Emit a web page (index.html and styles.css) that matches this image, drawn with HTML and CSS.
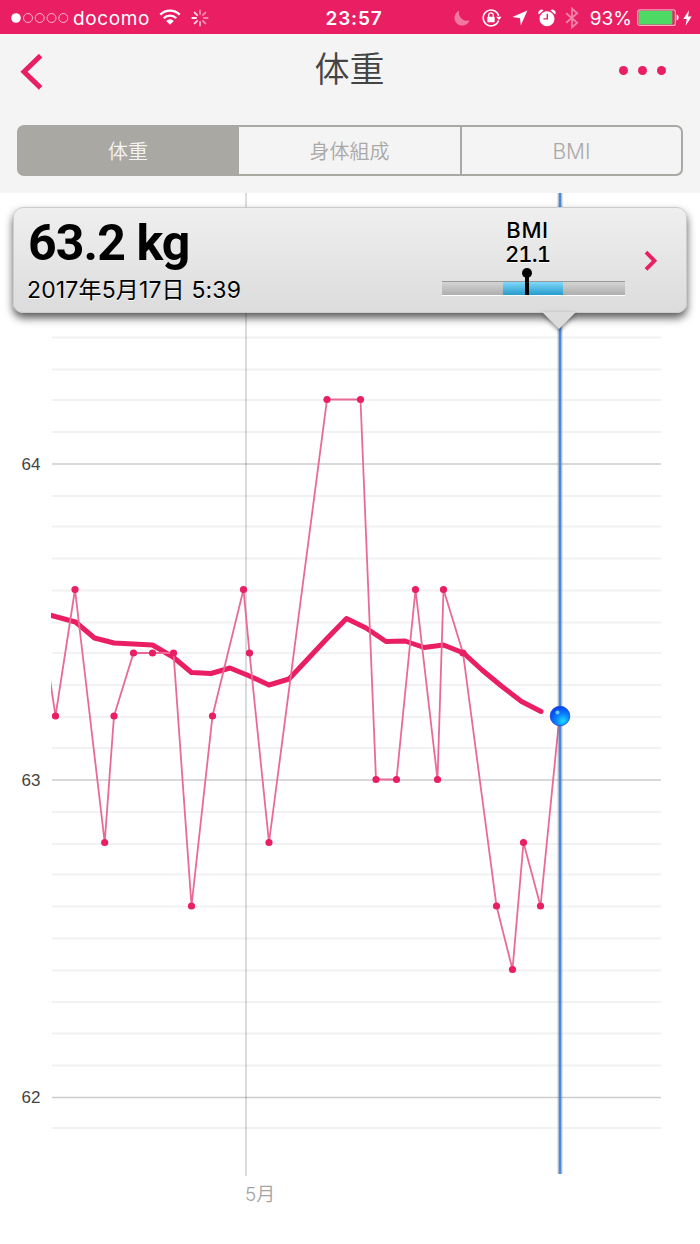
FILE: index.html
```html
<!DOCTYPE html>
<html lang="ja">
<head>
  <meta charset="UTF-8">
  <meta name="viewport" content="width=device-width, initial-scale=1.0">
  <title>体重</title>
  <link rel="stylesheet" href="styles.css">
</head>
<body>

  <div class="status-bar">
    <div class="status-left">
      <svg class="signal" width="58" height="12" viewBox="0 0 58 12">
        <circle cx="5" cy="6" r="4.8" fill="#fff"/>
        <g fill="none" stroke="#fff" stroke-opacity=".65" stroke-width="1">
          <circle cx="17" cy="6" r="4.5"/>
          <circle cx="28.7" cy="6" r="4.5"/>
          <circle cx="40.5" cy="6" r="4.5"/>
          <circle cx="52.3" cy="6" r="4.5"/>
        </g>
      </svg>
      <span class="carrier">docomo</span>
      <svg class="wifi" width="22" height="16" viewBox="0 0 22 16">
        <g fill="none" stroke="#fff" stroke-width="2.3">
          <path d="M1.3 5.6a13.6 13.6 0 0 1 19.4 0"/>
          <path d="M4.7 9.2a8.8 8.8 0 0 1 12.6 0"/>
        </g>
        <path d="M7.2 11.9a5.4 5.4 0 0 1 7.6 0L11 15.7z" fill="#fff"/>
      </svg>
      <svg class="spinner" width="18" height="18" viewBox="-9 -9 18 18">
        <g stroke="#fff" stroke-width="1.9" stroke-linecap="round">
          <path d="M0-4V-7.6" opacity=".45"/>
          <path d="M0-4V-7.6" opacity=".45" transform="rotate(45)"/>
          <path d="M0-4V-7.6" opacity=".45" transform="rotate(90)"/>
          <path d="M0-4V-7.6" opacity=".5" transform="rotate(135)"/>
          <path d="M0-4V-7.6" opacity=".65" transform="rotate(180)"/>
          <path d="M0-4V-7.6" opacity=".8" transform="rotate(225)"/>
          <path d="M0-4V-7.6" opacity=".95" transform="rotate(270)"/>
          <path d="M0-4V-7.6" opacity=".8" transform="rotate(315)"/>
        </g>
      </svg>
    </div>
    <div class="clock">23:57</div>
    <div class="status-right">
      <svg class="moon" width="16" height="16" viewBox="0 0 16 16">
        <path d="M5.2.6A7.8 7.8 0 1 0 15.6 10.3 8 8 0 0 1 5.2.6z" fill="#fff" opacity=".4"/>
      </svg>
      <svg class="lock" width="20" height="18" viewBox="0 0 20 18">
        <path d="M16.6 11.5A7.9 7.9 0 1 1 16.7 6.8" fill="none" stroke="#fff" stroke-width="1.5"/>
        <path d="M14 7.7h5.6l-2.6 3.4z" fill="#fff"/>
        <rect x="5.3" y="7.8" width="7.4" height="5.4" rx=".6" fill="#fff"/>
        <path d="M6.7 8V6.2a2.3 2.3 0 0 1 4.6 0V8" fill="none" stroke="#fff" stroke-width="1.3"/>
      </svg>
      <svg class="arrow" width="16" height="16" viewBox="0 0 16 16">
        <path d="M15.4.4L8.8 15.5 8 8.2.4 7z" fill="#fff"/>
      </svg>
      <svg class="alarm" width="18" height="18" viewBox="0 0 18 18">
        <circle cx="9" cy="9.7" r="7.5" fill="#fff"/>
        <path d="M.9 5.5A3.2 3.2 0 0 1 5.6 1.3zM17.1 5.5A3.2 3.2 0 0 0 12.4 1.3z" fill="#fff"/>
        <path d="M9.3 4.8v5.1H5.4" fill="none" stroke="#ea1e63" stroke-width="1.4"/>
      </svg>
      <svg class="bluetooth" width="14" height="22" viewBox="0 0 14 22">
        <path d="M1.2 6.2l11 9.5L7 20.4V1.6l5.2 4.7-11 9.5" fill="none" stroke="#fff" stroke-width="1.8" opacity=".45"/>
      </svg>
      <span class="percent">93%</span>
      <svg class="battery" width="42" height="18" viewBox="0 0 42 18">
        <rect x=".7" y=".8" width="37.6" height="15.6" rx="2" fill="none" stroke="#fff" stroke-opacity=".6" stroke-width="1.2"/>
        <rect x="1.6" y="1.7" width="33.8" height="13.8" rx="1" fill="#4cd964"/>
        <path d="M39.6 5.6q2 .6 2 3t-2 3z" fill="#fff"/>
      </svg>
      <svg class="bolt" width="9" height="16" viewBox="0 0 9 16">
        <path d="M6 .3L.3 8.9h3.5L2.6 15.7 8.7 6.6H5.1z" fill="#fff"/>
      </svg>
    </div>
  </div>

  <header class="header">
    <div class="nav">
      <svg class="back" width="24" height="36" viewBox="0 0 24 36">
        <path d="M20.6 1.6L4 17.7l16.6 16.2" fill="none" stroke="#ea1e63" stroke-width="5"/>
      </svg>
      <h1>体重</h1>
      <div class="more"><i></i><i></i><i></i></div>
    </div>
    <div class="tabs">
      <div class="tab active">体重</div>
      <div class="tab">身体組成</div>
      <div class="tab">BMI</div>
    </div>
  </header>

  <main class="chart">
    <svg class="plot" width="700" height="1051" viewBox="0 193 700 1051">
      <defs>
        <radialGradient id="ball" cx=".65" cy=".75" r=".7">
          <stop offset="0" stop-color="#19dcff"/>
          <stop offset=".5" stop-color="#0a84ff"/>
          <stop offset="1" stop-color="#0648f0"/>
        </radialGradient>
        <clipPath id="area"><rect x="51" y="193" width="620" height="990"/></clipPath>
      </defs>

      <path class="grid-minor" d="M52 337.5H661M52 369.5H661M52 400H661M52 432H661M52 496H661M52 526.5H661M52 558.5H661M52 590.5H661M52 622.5H661M52 653H661M52 685H661M52 717H661M52 748H661M52 812H661M52 844H661M52 874.5H661M52 906.5H661M52 938.5H661M52 970.5H661M52 1002H661M52 1033.5H661M52 1065.5H661M52 1128H661"/>
      <path class="grid-major" d="M52 464H661M52 780H661M52 1097.5H661"/>
      <path class="grid-month" d="M246 193V1176"/>

      <g clip-path="url(#area)">
        <polyline class="average" points="46,614 75.5,622 94.5,638 114,643 152.5,645 173,657 191.5,672.5 211,673.5 230,668 249.5,676 269,685 289,679 327,638.5 346.5,618.5 366,628 386,641.5 405,641 424,647.5 443.5,645 463.5,653 482,670 502,686.5 521.5,701.5 541,711.5"/>
        <polyline class="weight" points="46,653 55.5,716 75,589.5 104.7,842.5 114,716 133.5,653 152.5,653 173.5,653 191.5,906 212.5,716 243.5,589.5 249.5,653 269,842.5 327,399.5 360.5,399.5 376,779.5 396.5,779.5 415.5,589.5 437.5,779.5 443.5,589.5 463,653 496.5,906 512.5,969.5 523.5,842.5 540.5,906 559.5,716"/>
      </g>
      <g class="dots">
        <circle cx="55.5" cy="716" r="3.6"/>
        <circle cx="75" cy="589.5" r="3.6"/>
        <circle cx="104.7" cy="842.5" r="3.6"/>
        <circle cx="114" cy="716" r="3.6"/>
        <circle cx="133.5" cy="653" r="3.6"/>
        <circle cx="152.5" cy="653" r="3.6"/>
        <circle cx="173.5" cy="653" r="3.6"/>
        <circle cx="191.5" cy="906" r="3.6"/>
        <circle cx="212.5" cy="716" r="3.6"/>
        <circle cx="243.5" cy="589.5" r="3.6"/>
        <circle cx="249.5" cy="653" r="3.6"/>
        <circle cx="269" cy="842.5" r="3.6"/>
        <circle cx="327" cy="399.5" r="3.6"/>
        <circle cx="360.5" cy="399.5" r="3.6"/>
        <circle cx="376" cy="779.5" r="3.6"/>
        <circle cx="396.5" cy="779.5" r="3.6"/>
        <circle cx="415.5" cy="589.5" r="3.6"/>
        <circle cx="437.5" cy="779.5" r="3.6"/>
        <circle cx="443.5" cy="589.5" r="3.6"/>
        <circle cx="463" cy="653" r="3.6"/>
        <circle cx="496.5" cy="906" r="3.6"/>
        <circle cx="512.5" cy="969.5" r="3.6"/>
        <circle cx="523.5" cy="842.5" r="3.6"/>
        <circle cx="540.5" cy="906" r="3.6"/>
      </g>

      <path class="cursor-glow" d="M560 193V1174"/>
      <path class="cursor" d="M560 193V1174"/>
      <circle cx="560" cy="716" r="9.8" fill="url(#ball)" stroke="#1b48dc" stroke-width=".8"/>
      <circle cx="557.5" cy="712.5" r="2" fill="#7fe0ff" opacity=".8"/>

      <g class="y-label">
        <text x="21.5" y="469.5">64</text>
        <text x="21.5" y="786">63</text>
        <text x="21.5" y="1103">62</text>
      </g>
      <text class="x-label" x="245" y="1200.5">5月</text>
    </svg>

    <div class="callout">
      <div class="measure">
        <div class="value">63.2 kg</div>
        <div class="date">2017年5月17日 5:39</div>
      </div>
      <div class="bmi">
        <div class="bmi-text">BMI<br><span class="bmi-value">21.1</span></div>
        <div class="gauge">
          <div class="range"></div>
          <div class="pin"></div>
        </div>
      </div>
      <svg class="next" width="14" height="22" viewBox="0 0 14 22">
        <path d="M2 2.2l8.5 8.6L2 19.4" fill="none" stroke="#ea1e63" stroke-width="3.8"/>
      </svg>
      <div class="pointer"></div>
    </div>
  </main>

</body>
</html>
```
FILE: styles.css
```css
* {
  box-sizing: border-box;
}

body {
  margin: 0;
  width: 700px;
  height: 1244px;
  overflow: hidden;
  background: #fff;
  font-family: Inter, "Noto Sans CJK JP", sans-serif;
}

svg {
  display: block;
  flex: none;
}

/* status bar */
.status-bar {
  display: grid;
  grid-template-columns: 1fr 60px 1fr;
  align-items: center;
  height: 34px;
  padding: 0 9px 0 11px;
  background: #ea1e63;
  color: #fff;
  font-size: 19px;
  line-height: 34px;
}

.status-left,
.status-right {
  display: flex;
  align-items: center;
}

.status-right {
  justify-content: flex-end;
}

.carrier {
  margin-left: 4px;
  padding-top: 2px;
  letter-spacing: 0.6px;
}

.wifi {
  margin: 0 0 2px 9px;
}

.spinner {
  margin-left: 10px;
}

.clock {
  margin: 0 -3px 0 3px;
  padding-top: 2px;
  font-weight: 600;
  text-align: center;
  letter-spacing: 0.8px;
}

.moon {
  margin-right: 1px;
}

.lock {
  margin-left: 11px;
}

.arrow {
  margin-left: 10px;
}

.alarm {
  margin-left: 10px;
}

.bluetooth {
  margin-left: 9px;
}

.percent {
  margin-left: 11px;
  padding-top: 2px;
}

.battery {
  margin-left: 5px;
}

.bolt {
  margin: 0 -1px 0 4px;
}

/* header */
.header {
  height: 159px;
  background: #f4f4f4;
}

.nav {
  display: grid;
  grid-template-columns: 1fr auto 1fr;
  align-items: center;
  height: 74px;
  padding: 0 34px 0 18px;
}

.back {
  margin: 1px 0 0 2px;
}

h1 {
  margin: 0 0 8px 15px;
  color: #444;
  font-family: "Noto Sans CJK JP", sans-serif;
  font-size: 35px;
  font-weight: 350;
  line-height: 60px;
}

.more {
  display: flex;
  justify-content: flex-end;
  gap: 10px;
  margin-bottom: 1px;
}

.more i {
  width: 9px;
  height: 9px;
  border-radius: 50%;
  background: #ea1e63;
}

.tabs {
  display: grid;
  grid-template-columns: 218px 223px 1fr;
  height: 51px;
  margin: 17px 17px 0;
  border: 2px solid #a9a8a3;
  border-radius: 7px;
}

.tab {
  padding-top: 4px;
  border-left: 2px solid #a9a8a3;
  color: #aaa9a6;
  font-size: 20px;
  font-weight: 350;
  line-height: 43px;
  text-align: center;
}

.tab:last-child {
  padding-top: 3px;
  font-size: 21px;
}

.tab.active {
  border-left: 0;
  background: #a9a8a3;
  color: #f4f4f4;
}

/* chart */
.chart {
  position: relative;
  height: 1051px;
}

.grid-minor {
  stroke: #f2f2f2;
  stroke-width: 2;
}

.grid-major {
  stroke: #000;
  stroke-opacity: 0.2;
  stroke-width: 1.7;
}

.grid-month {
  stroke: #000;
  stroke-opacity: 0.14;
  stroke-width: 2;
}

.average {
  fill: none;
  stroke: #ea1e63;
  stroke-width: 5;
  stroke-linecap: round;
  stroke-linejoin: round;
}

.weight {
  fill: none;
  stroke: #e96b95;
  stroke-width: 1.8;
}

.dots {
  fill: #ea1e63;
}

.cursor-glow {
  stroke: #50647d;
  stroke-opacity: 0.35;
  stroke-width: 5;
}

.cursor {
  stroke: #4c89d8;
  stroke-width: 2.4;
}

.y-label {
  fill: #444;
  font-family: "Liberation Sans", sans-serif;
  font-size: 17px;
}

.x-label {
  fill: #a3a3a3;
  font-size: 19px;
  font-weight: 350;
}

/* callout over the chart */
.callout {
  position: absolute;
  top: 14px;
  left: 13px;
  display: flex;
  width: 674px;
  height: 106px;
  padding: 0 28px 0 14px;
  border: 1px solid #ccc;
  border-radius: 10px;
  background: linear-gradient(#efefef, #dcdcdc);
  box-shadow: 0 5px 9px rgba(0, 0, 0, 0.65);
  color: #000;
}

.measure {
  flex: 1;
}

.value {
  height: 67px;
  font-family: Roboto, sans-serif;
  font-size: 50px;
  font-weight: 700;
  line-height: 70px;
  letter-spacing: -0.9px;
}

.date {
  margin-left: -1px;
  font-size: 23px;
  line-height: 30px;
  letter-spacing: 0.15px;
  text-shadow: 0 1px 0 #fff;
  white-space: nowrap;
}

.bmi {
  width: 183px;
  padding-top: 10px;
}

.bmi-text {
  margin-left: -12px;
  font-size: 22px;
  font-weight: 500;
  letter-spacing: 0.6px;
  line-height: 24px;
  text-align: center;
  text-shadow: 0 1px 0 #fff;
}

.bmi-value {
  font-feature-settings: "tnum";
  letter-spacing: -0.9px;
}

.gauge {
  position: relative;
  height: 15px;
  margin-top: 15px;
  border-top: 1px solid #999;
  border-bottom: 1px solid #fff;
  background: linear-gradient(#d4d4d4, #adadad);
}

.range {
  width: 60px;
  height: 13px;
  margin-left: 61px;
  background: linear-gradient(#80d8fa, #269bcb);
}

.pin {
  position: absolute;
  top: -10px;
  left: 83px;
  width: 4px;
  height: 23px;
  background: #000;
}

.pin::before {
  content: "";
  position: absolute;
  top: -4px;
  left: -3px;
  width: 10px;
  height: 10px;
  border-radius: 50%;
  background: #000;
}

.next {
  align-self: center;
  margin: 1px 0 0 19px;
}

.pointer {
  position: absolute;
  top: 104px;
  left: 528px;
  width: 34px;
  height: 17px;
  filter: drop-shadow(0 2px 2px rgba(0, 0, 0, 0.45));
}

.pointer::before {
  content: "";
  display: block;
  height: 17px;
  background: #dcdcdc;
  clip-path: polygon(0 0, 100% 0, 50% 100%);
}
```
